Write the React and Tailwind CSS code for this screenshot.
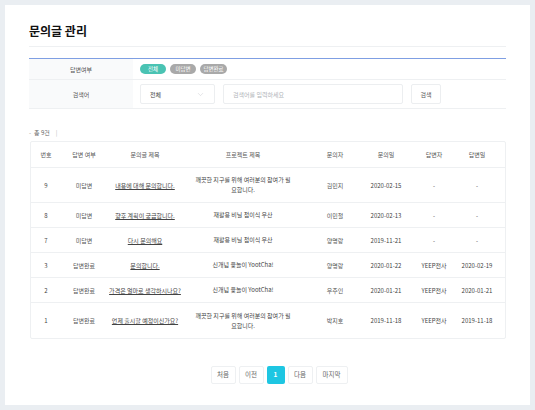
import React from "react";
import { ChevronDown } from "lucide-react";

const rows = [
  { no: 9, status: "미답변", title: "내용에 대해 문의합니다.", project: "깨끗한 지구를 위해 여러분의 참여가 필요합니다.", user: "김민지", date: "2020-02-15", answerer: "-", answered: "-", tall: true },
  { no: 8, status: "미답변", title: "향후 계획이 궁금합니다.", project: "재활용 비닐 접이식 우산", user: "이민철", date: "2020-02-13", answerer: "-", answered: "-" },
  { no: 7, status: "미답변", title: "다시 문의해요", project: "재활용 비닐 접이식 우산", user: "양명랑", date: "2019-11-21", answerer: "-", answered: "-" },
  { no: 3, status: "답변완료", title: "문의합니다.", project: "신개념 윷놀이 YootCha!", user: "양명랑", date: "2020-01-22", answerer: "YEEP전사", answered: "2020-02-19" },
  { no: 2, status: "답변완료", title: "가격은 얼마로 생각하시나요?", project: "신개념 윷놀이 YootCha!", user: "우주인", date: "2020-01-21", answerer: "YEEP전사", answered: "2020-01-21" },
  { no: 1, status: "답변완료", title: "언제 출시할 예정이신가요?", project: "깨끗한 지구를 위해 여러분의 참여가 필요합니다.", user: "박지호", date: "2019-11-18", answerer: "YEEP전사", answered: "2019-11-18", tall: true },
];

const cols = "grid grid-cols-[30px_46px_76px_120px_64px_38px_58px_43px]";

const App = () => {
  return (
    <div className="min-h-[410px] bg-[#eaeef2] p-[5px] font-['Noto_Sans_CJK_KR','Noto_Sans',sans-serif]">
      <div className="bg-white px-[24px] pt-[20px] h-[400px]">
        <h1 className="text-[12px] font-bold text-[#111] leading-[12px] pb-[9px] border-b border-[#eef0f2]">
          문의글 관리
        </h1>

        {/* filter */}
        <div className="mt-[11px] border-t-[1.5px] border-[#7f9fe3] text-[6px] text-[#555]">
          <div className="flex h-[21px] border-b border-[#eef0f2]">
            <div className="w-[104px] bg-[#f9fafb] flex items-center justify-center">답변여부</div>
            <div className="flex items-center gap-[4px] pl-[7px]">
              <span className="h-[10px] w-[26px] rounded-full bg-[#4ac3b3] text-white text-[5.5px] flex items-center justify-center">전체</span>
              <span className="h-[10px] w-[26px] rounded-full bg-[#a9a9a9] text-white text-[5.5px] flex items-center justify-center">미답변</span>
              <span className="h-[10px] w-[27px] rounded-full bg-[#a9a9a9] text-white text-[5.5px] flex items-center justify-center">답변완료</span>
            </div>
          </div>
          <div className="flex h-[29px] border-b border-[#eef0f2]">
            <div className="w-[104px] bg-[#f9fafb] flex items-center justify-center">검색어</div>
            <div className="flex items-center pl-[7px]">
              <div className="w-[75px] h-[20px] border border-[#eceef0] rounded-[2px] flex items-center justify-between px-[9px] text-[#444]">
                전체
                <ChevronDown size={9} strokeWidth={1.2} className="text-[#c4c8cc]" />
              </div>
              <div className="ml-[8px] w-[180px] h-[20px] border border-[#eceef0] rounded-[2px] flex items-center px-[9px] text-[#b0b4b8]">
                검색어를 입력하세요
              </div>
              <div className="ml-[8px] w-[30px] h-[20px] border border-[#eceef0] rounded-[2px] flex items-center justify-center text-[#555]">
                검색
              </div>
            </div>
          </div>
        </div>

        <div className="mt-[21px] text-[6px] text-[#666] flex items-center gap-[3px] leading-[6px]">
          <span className="text-[#999]">-</span>
          <span>총 9건</span>
          <span className="ml-[3px] text-[#bbb]">|</span>
        </div>

        {/* table */}
        <div className="mt-[5px] ml-[1px] border border-[#eef0f2] rounded-[2px] text-[6px] text-[#555]">
          <div className={`${cols} h-[26px] items-center text-center border-b border-[#eef0f2] text-[#555]`}>
            <div>번호</div>
            <div>답변 여부</div>
            <div>문의글 제목</div>
            <div>프로젝트 제목</div>
            <div>문의자</div>
            <div>문의일</div>
            <div>답변자</div>
            <div className="pr-[15px]">답변일</div>
          </div>
          {rows.map((r, i) => (
            <div
              key={r.no}
              className={`${cols} items-center text-center ${r.tall ? "h-[35px]" : "h-[25px]"} ${i < rows.length - 1 ? "border-b border-[#eef0f2]" : ""}`}
            >
              <div className="text-[#444]">{r.no}</div>
              <div>{r.status}</div>
              <div className="whitespace-nowrap flex justify-center">
                <span className="underline underline-offset-[1px] text-[#444]">{r.title}</span>
              </div>
              <div className="px-[12px] leading-[10px] text-[#444]">{r.project}</div>
              <div>{r.user}</div>
              <div className="whitespace-nowrap flex justify-center text-[#444]">{r.date}</div>
              <div className="text-[#444]">{r.answerer}</div>
              <div className="whitespace-nowrap flex justify-center pr-[15px] text-[#444]">{r.answered}</div>
            </div>
          ))}
        </div>

        {/* pagination */}
        <div className="mt-[27px] pl-[23px] flex justify-center gap-[3px] text-[6.5px] text-[#666]">
          <button className="w-[25px] h-[18px] border border-[#eef0f2] rounded-[2px]">처음</button>
          <button className="w-[25px] h-[18px] border border-[#eef0f2] rounded-[2px]">이전</button>
          <button className="w-[18px] h-[18px] rounded-[2px] bg-[#1ec6e2] text-white font-bold">1</button>
          <button className="w-[25px] h-[18px] border border-[#eef0f2] rounded-[2px]">다음</button>
          <button className="w-[32px] h-[18px] border border-[#eef0f2] rounded-[2px]">마지막</button>
        </div>
      </div>
    </div>
  );
};

export default App;
